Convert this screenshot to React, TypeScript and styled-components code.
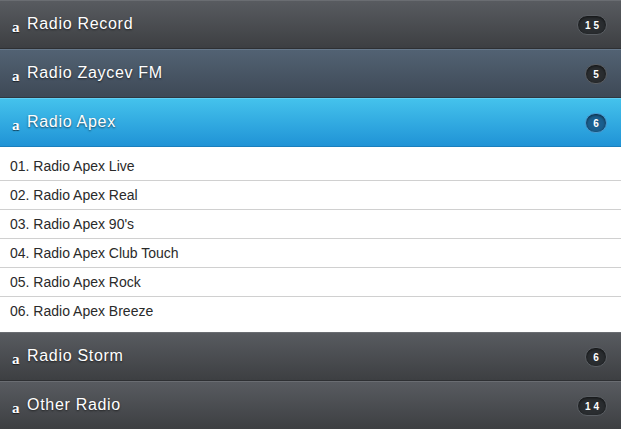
import React from "react";
import styled, { createGlobalStyle, css } from "styled-components";

type Variant = "dark" | "slate" | "active";

interface Station {
  title: string;
  count: number;
  variant: Variant;
  items?: string[];
}

const stations: Station[] = [
  { title: "Radio Record", count: 15, variant: "dark" },
  { title: "Radio Zaycev FM", count: 5, variant: "slate" },
  {
    title: "Radio Apex",
    count: 6,
    variant: "active",
    items: [
      "01. Radio Apex Live",
      "02. Radio Apex Real",
      "03. Radio Apex 90's",
      "04. Radio Apex Club Touch",
      "05. Radio Apex Rock",
      "06. Radio Apex Breeze",
    ],
  },
  { title: "Radio Storm", count: 6, variant: "dark" },
  { title: "Other Radio", count: 14, variant: "dark" },
];

function App() {
  return (
    <>
      <GlobalStyle />
      <Accordion>
        {stations.map((s) => (
          <Group key={s.title}>
            <Header $variant={s.variant}>
              <Glyph>a</Glyph>
              <Title>{s.title}</Title>
              <Count $active={s.variant === "active"} $wide={s.count > 9}>
                {String(s.count).split("").join(" ")}
              </Count>
            </Header>
            {s.items && (
              <List>
                {s.items.map((item) => (
                  <Item key={item}>{item}</Item>
                ))}
              </List>
            )}
          </Group>
        ))}
      </Accordion>
    </>
  );
}
export default App;

const GlobalStyle = createGlobalStyle`
  html, body {
    margin: 0;
    padding: 0;
    background: #ffffff;
    overflow: hidden;
  }
  body {
    font-family: "Liberation Sans", Arial, sans-serif;
  }
`;

const Accordion = styled.div`
  width: 621px;
  display: flex;
  flex-direction: column;
`;

const Group = styled.div`
  display: flex;
  flex-direction: column;
`;

const headerColors = {
  dark: css`
    background: linear-gradient(#585b60, #3d3f42);
    border-top: 1px solid #6a6d72;
    border-bottom: 1px solid #2e3033;
  `,
  slate: css`
    background: linear-gradient(#526273, #3e4956);
    border-top: 1px solid #66788a;
    border-bottom: 1px solid #2f3841;
  `,
  active: css`
    background: linear-gradient(#44c2ec, #2093d6);
    border-top: 1px solid #5fd0f4;
    border-bottom: 1px solid #1a7fbd;
  `,
};

const Header = styled.div<{ $variant: Variant }>`
  height: 46px;
  display: flex;
  align-items: center;
  padding: 0 14px 1px 12px;
  color: #ffffff;
  ${(p) => headerColors[p.$variant]}
`;

const Glyph = styled.span`
  font-family: "Liberation Serif", "Times New Roman", serif;
  font-weight: bold;
  font-size: 15px;
  margin-top: 6px;
  width: 15px;
  text-shadow: 0 1px 1px rgba(0, 0, 0, 0.6);
`;

const Title = styled.span`
  flex: 1;
  font-size: 16px;
  letter-spacing: 0.7px;
  text-shadow: 0 1px 2px rgba(0, 0, 0, 0.6);
`;

const Count = styled.span<{ $active: boolean; $wide: boolean }>`
  min-width: ${(p) => (p.$wide ? "24px" : "16px")};
  height: 18px;
  padding: 0 2px;
  margin-top: 2px;
  border-radius: 10px;
  display: flex;
  align-items: center;
  justify-content: center;
  font-size: 10px;
  font-weight: bold;
  white-space: pre;
  background: ${(p) => (p.$active ? "#1b5f8e" : "#2a2d30")};
  border: 1px solid ${(p) => (p.$active ? "#4a9ad0" : "#5a5e63")};
  box-shadow: inset 0 1px 3px rgba(0, 0, 0, 0.6);
`;

const List = styled.ul`
  list-style: none;
  margin: 0;
  padding: 5px 0 7px;
  background: #ffffff;
`;

const Item = styled.li`
  height: 28px;
  line-height: 28px;
  padding-left: 10px;
  font-size: 14px;
  color: #2a2a2a;
  border-bottom: 1px solid #d0d0d0;

  &:last-child {
    border-bottom: none;
  }
`;
